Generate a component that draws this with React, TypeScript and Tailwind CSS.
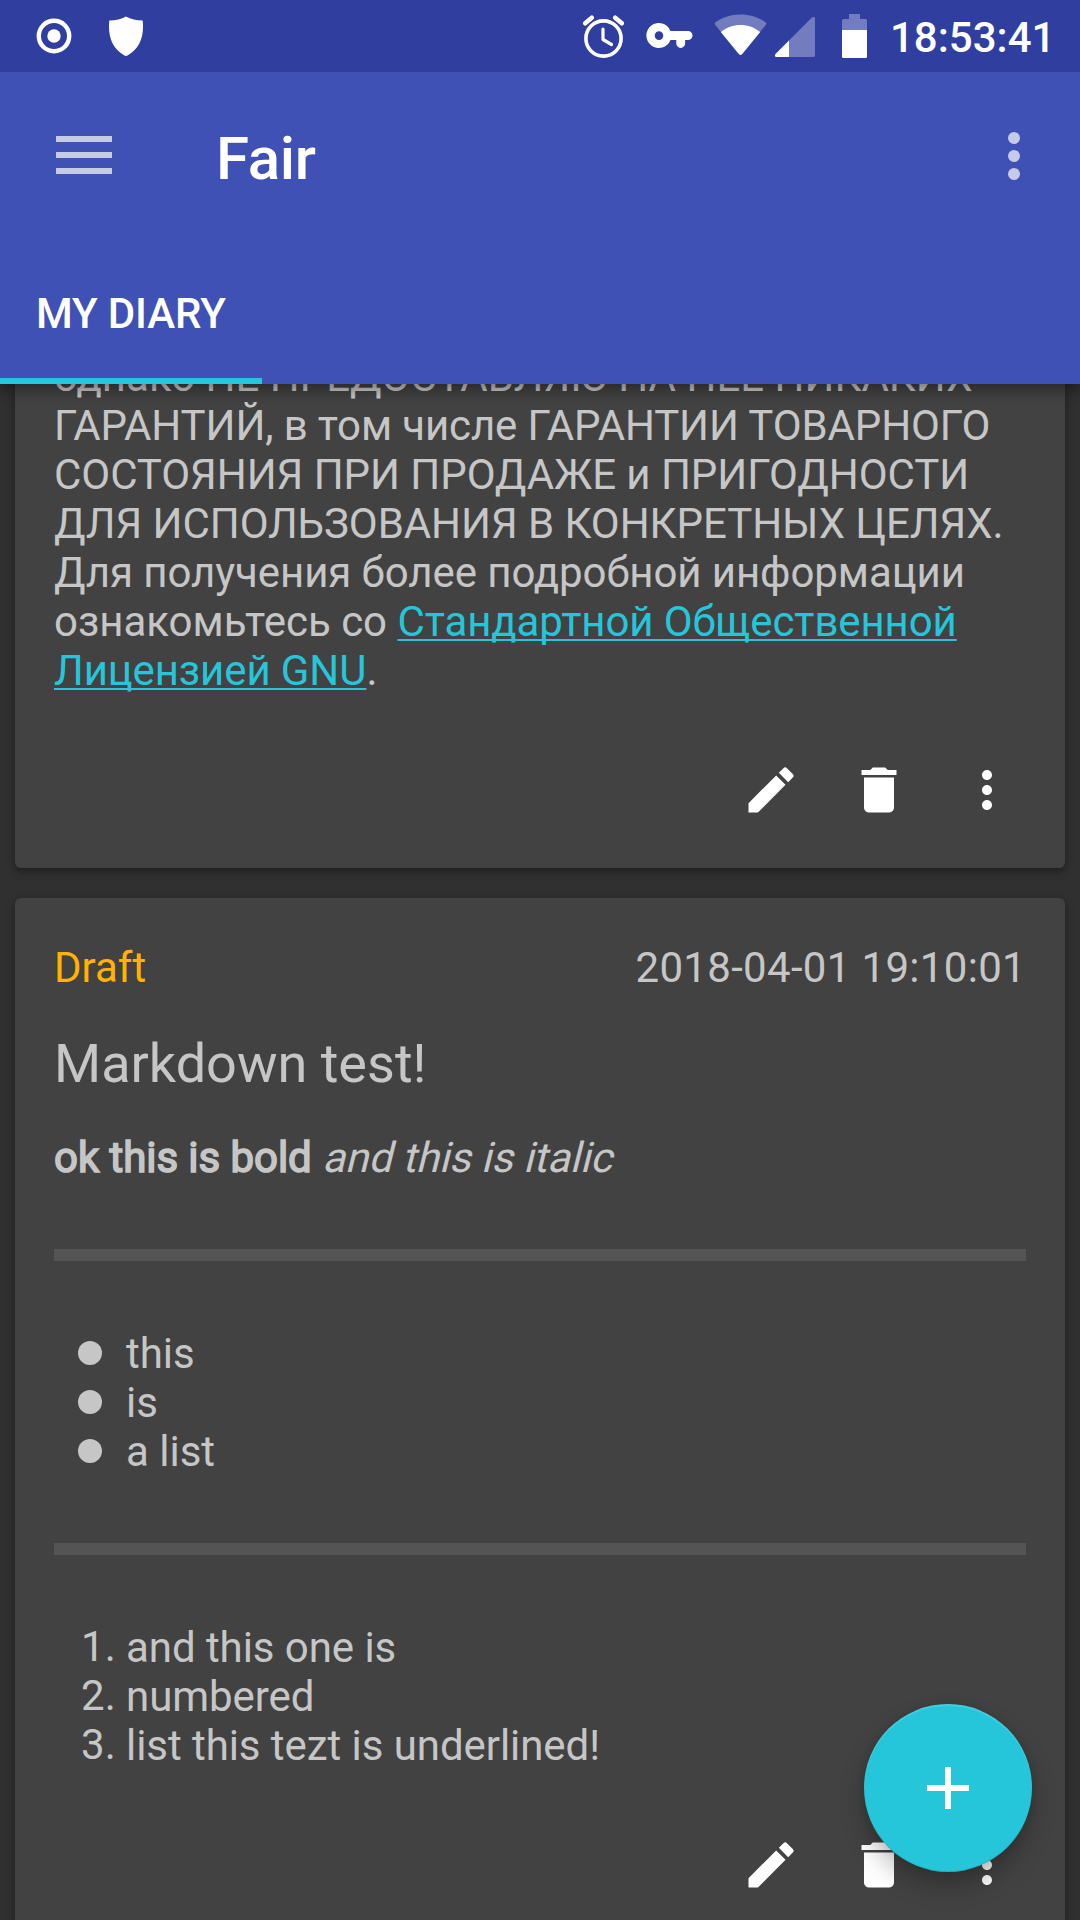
import React from "react";

function StatusBar() {
  return (
    <div className="flex h-[72px] bg-[#303f9f] text-white">
      <div className="flex flex-1 pl-9">
        <svg className="h-[72px] w-9" viewBox="36 0 36 72" fill="none">
          <circle cx="54" cy="36" r="15.2" stroke="#fff" strokeWidth="4.4" />
          <circle cx="54" cy="36" r="6.7" fill="#fff" />
        </svg>
        <svg className="ml-9 h-[72px] w-9" viewBox="108 0 36 72" fill="#fff">
          <path d="M126 16.4Q133 20.2 142.7 20.4C144.4 37 139.5 48.5 127.6 55.5Q126 56.4 124.4 55.5C112.500 48.500 107.600 37 109.300 20.400Q119 20.200 126 16.400Z" />
        </svg>
      </div>
      <svg className="h-[72px] w-[42px]" viewBox="582 0 42 72" fill="none" stroke="#fff">
        <circle cx="603.500" cy="38.500" r="17.600" strokeWidth="3.600" />
        <path d="M603 29v10.500l8.500 5" strokeWidth="3.200" strokeLinecap="round" strokeLinejoin="round" />
        <path d="M585.200 23.300l6.600-5.600M621.800 23.300l-6.600-5.600" strokeWidth="4.400" strokeLinecap="round" />
      </svg>
      <svg className="ml-[22px] h-[72px] w-[48px]" viewBox="646 0 48 72">
        <path
          fill="#fff"
          fillRule="evenodd"
          d="M670.500 31A12.500 12.500 0 1 0 670.500 40H676.300V43.500a4.400 4.400 0 0 0 8.800 0V40H688a4.500 4.500 0 0 0 0-9ZM659 31.300a4.300 4.300 0 1 1 0 8.600a4.300 4.300 0 0 1 0-8.600Z"
        />
      </svg>
      <svg className="ml-5 h-[72px] w-[54px]" viewBox="714 0 54 72">
        <path fill="#fff" fillOpacity=".32" d="M740.500 14.500c10 0 18.500 3 25.300 8q.8 1-.1 2.400L742 54.300q-1.500 1.600-3 0L715.300 24.900q-.9-1.400-.1-2.400c6.800-5 15.300-8 25.300-8Z" />
        <path fill="#fff" d="M740.500 25c7.500 0 14 2.500 19.700 7L742 54.300q-1.500 1.600-3 0L720.800 32c5.700-4.500 12.200-7 19.700-7Z" />
      </svg>
      <svg className="ml-[6px] h-[72px] w-[42px]" viewBox="774 0 42 72">
        <path fill="#fff" fillOpacity=".32" d="M789 40.500L811.700 17.700q1.500-1.200 3.300 0V55.500q0 1.500-1.500 1.500H789Z" />
        <path fill="#fff" d="M789 40.500V57H776q-2-1-.5-3Z" />
      </svg>
      <svg className="ml-[24px] h-[72px] w-[30px]" viewBox="840 0 30 72">
        <path fill="#fff" fillOpacity=".32" d="M849 14h11v5h5.500q1.500 0 1.500 1.500V30h-25v-9.500q0-1.500 1.500-1.500h5.500Z" />
        <path fill="#fff" d="M842 30h25v26.500q0 1.500-1.500 1.500h-22q-1.500 0-1.500-1.500Z" />
      </svg>
      <span className="ml-5 mt-[13px] w-[190px] text-[42px] font-medium leading-[49px]">18:53:41</span>
    </div>
  );
}

function AppBar() {
  return (
    <header className="relative z-10 h-[384px] bg-[#3f51b5] text-white shadow-[0_5px_14px_rgba(0,0,0,0.42)]">
      <StatusBar />
      <div className="flex h-[168px] items-start pl-14 pr-[60px]">
        <div className="mt-16 flex w-14 flex-col gap-[10px]">
          <span className="h-[6px] bg-[#c5cae9]" />
          <span className="h-[6px] bg-[#c5cae9]" />
          <span className="h-[6px] bg-[#c5cae9]" />
        </div>
        <h1 className="ml-[104px] mt-[51px] flex-1 text-[60px] font-medium leading-[71px] tracking-[-0.3px]">Fair</h1>
        <div className="mt-[60px] flex flex-col gap-[6px]">
          <span className="size-3 rounded-full bg-[#c5cae9]" />
          <span className="size-3 rounded-full bg-[#c5cae9]" />
          <span className="size-3 rounded-full bg-[#c5cae9]" />
        </div>
      </div>
      <div className="flex h-36 w-[262px] items-center border-b-[6px] border-[#26c6da] px-9 pt-[9px]">
        <span className="whitespace-nowrap text-[42px] font-medium leading-[49px] tracking-[-0.15px]">MY DIARY</span>
      </div>
    </header>
  );
}

function Actions() {
  return (
    <div className="mt-[65px] flex justify-end pr-[24px]">
      <svg className="mx-6 size-[60px]" viewBox="0 0 24 24" fill="#fff">
        <path d="M3 17.250V21h3.750L17.810 9.940l-3.750-3.750L3 17.250zM20.710 7.040a.996.996 0 0 0 0-1.410l-2.340-2.340a.996.996 0 0 0-1.410 0l-1.830 1.830 3.750 3.750 1.830-1.830z" />
      </svg>
      <svg className="mx-6 size-[60px]" viewBox="0 0 24 24" fill="#fff">
        <path d="M6 19c0 1.100.9 2 2 2h8c1.100 0 2-.9 2-2V7H6v12zM19 4h-3.500l-1-1h-5l-1 1H5v2h14V4z" />
      </svg>
      <svg className="mx-6 size-[60px]" viewBox="0 0 24 24" fill="#fff">
        <path d="M12 8c1.100 0 2-.9 2-2s-.9-2-2-2-2 .9-2 2 .9 2 2 2zm0 2c-1.100 0-2 .9-2 2s.9 2 2 2 2-.9 2-2-.9-2-2-2zm0 6c-1.100 0-2 .9-2 2s.9 2 2 2 2-.9 2-2-.9-2-2-2z" />
      </svg>
    </div>
  );
}

const card = "rounded-[6px] bg-[#424242] shadow-[0_3px_8px_rgba(0,0,0,0.4)]";
const link =
  "text-[#26c6da] underline decoration-2 underline-offset-[3px] tracking-[-0.1px] [text-decoration-skip-ink:none]";

export default function App() {
  const bullets = ["this", "is", "a list"];
  const steps = ["and this one is", "numbered", "list this tezt is underlined!"];
  return (
    <div className="relative h-[1920px] w-[1080px] overflow-hidden bg-[#303030] font-['Roboto',sans-serif] text-[42px] leading-[49px] text-[#c6c6c6]">
      <AppBar />
      <main className="flex flex-col gap-[30px] px-[15px]">
        <article className={`${card} -mt-20 h-[564px] pt-12`}>
          <p className="whitespace-nowrap px-[39px]">
            однако НЕ ПРЕДОСТАВЛЯЮ НА НЕЕ НИКАКИХ
            <br />
            <span className="tracking-[-0.12px]">ГАРАНТИЙ, в том числе ГАРАНТИИ ТОВАРНОГО</span>
            <br />
            <span className="tracking-[-0.05px]">СОСТОЯНИЯ ПРИ ПРОДАЖЕ и ПРИГОДНОСТИ</span>
            <br />
            <span className="tracking-[-0.05px]">ДЛЯ ИСПОЛЬЗОВАНИЯ В КОНКРЕТНЫХ ЦЕЛЯХ.</span>
            <br />
            <span className="tracking-[-0.08px]">Для получения более подробной информации</span>
            <br />
            ознакомьтесь со <a className={link}>Стандартной Общественной</a>
            <br />
            <a className={link}>Лицензией GNU</a>.
          </p>
          <Actions />
        </article>
        <article className={`${card} h-[1060px] pt-[45px]`}>
          <div className="px-[39px]">
            <div className="flex justify-between">
              <span className="text-[#ffb300]">Draft</span>
              <span className="tracking-[0.32px]">2018-04-01 19:10:01</span>
            </div>
            <h2 className="mt-10 text-[54px] leading-[63px]">Markdown test!</h2>
            <p className="mt-[38px] tracking-[-0.06px]">
              <b className="font-normal [-webkit-text-stroke:1.6px_#c6c6c6]">ok this is bold</b>{" "}
              <i className="inline-block origin-[0_39px] -skew-x-[14deg] not-italic">and this is italic</i>
            </p>
            <div className="mt-[67px] h-3 bg-[#545454]" />
            <ul className="mt-[68px] pl-6">
              {bullets.map((b) => (
                <li key={b} className="flex">
                  <span className="mr-6 mt-3 size-6 rounded-full bg-[#c6c6c6]" />
                  {b}
                </li>
              ))}
            </ul>
            <div className="mt-[67px] h-3 bg-[#545454]" />
            <ol className="mt-[68px] tracking-[-0.06px]">
              {steps.map((s, i) => (
                <li key={s} className="flex">
                  <span className="-mt-px mb-px w-[72px] pl-[27px] tracking-[0.2px]">{i + 1}.</span>
                  {s}
                </li>
              ))}
            </ol>
          </div>
          <Actions />
        </article>
      </main>
      <button className="absolute left-[864px] top-[1704px] flex size-[168px] items-center justify-center rounded-full bg-[#26c6da] shadow-[0_14px_24px_rgba(0,0,0,0.25),0_0_8px_rgba(0,0,0,0.1),inset_0_2px_1px_rgba(255,255,255,0.14),inset_0_-1px_1px_rgba(0,0,0,0.1)]">
        <svg className="size-[42px]" viewBox="0 0 42 42" fill="#fff">
          <path d="M18 0h6v18h18v6H24v18h-6V24H0v-6h18z" />
        </svg>
      </button>
    </div>
  );
}
